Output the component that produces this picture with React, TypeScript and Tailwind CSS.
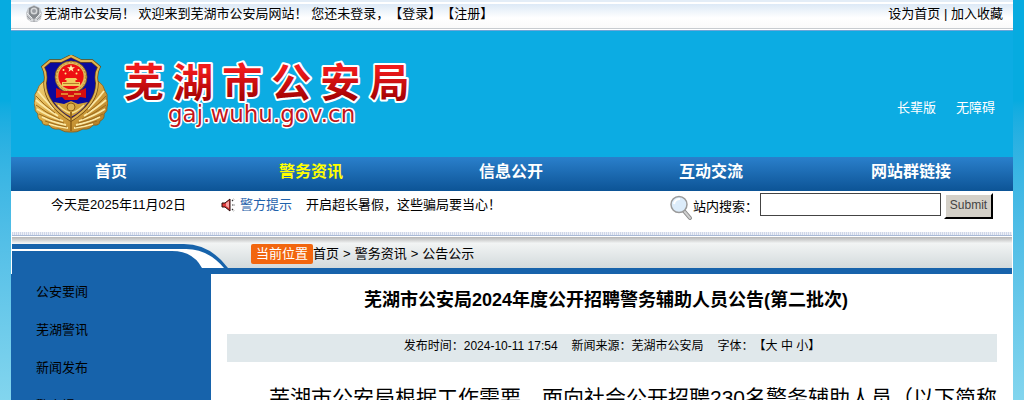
import React, { useState } from 'react';

interface NavItem {
  label: string;
  active?: boolean;
}

const navItems: NavItem[] = [
  { label: '首页' },
  { label: '警务资讯', active: true },
  { label: '信息公开' },
  { label: '互动交流' },
  { label: '网站群链接' },
];

const sideItems = ['公安要闻', '芜湖警讯', '新闻发布', '警方提示'];

const Emblem: React.FC<{ className?: string }> = ({ className }) => (
  <svg viewBox="0 0 74 78" className={className} aria-hidden="true">
    <defs>
      <linearGradient id="gold" x1="0" y1="0" x2="1" y2="1">
        <stop offset="0" stopColor="#f3d57a" />
        <stop offset="0.5" stopColor="#d8a640" />
        <stop offset="1" stopColor="#a87220" />
      </linearGradient>
    </defs>
    {/* Pine branches */}
    <path
      d="M10 26 Q4 30 3 36 Q0 39 1 44 Q-1 48 1 52 Q0 56 4 59 Q3 64 8 66 Q8 71 15 70 Q18 75 25 74 Q31 78 37 77 Q43 78 49 74 Q56 75 59 70 Q66 71 66 66 Q71 64 70 59 Q74 56 73 52 Q75 48 73 44 Q74 39 71 36 Q70 30 64 26 Z"
      fill="url(#gold)"
      stroke="#8a5c16"
      strokeWidth="0.8"
    />
    <path
      d="M4 36 Q10 44 20 54 M2 45 Q10 52 24 61 M3 54 Q14 61 29 66 M8 62 Q18 67 32 70 M15 69 Q24 72 34 73 M70 36 Q64 44 54 54 M72 45 Q64 52 50 61 M71 54 Q60 61 45 66 M66 62 Q56 67 42 70 M59 69 Q50 72 40 73"
      stroke="#fbe9a6"
      strokeWidth="1.800"
      fill="none"
    />
    <path
      d="M2 41 Q9 49 21 58 M2 50 Q12 58 26 64 M5 59 Q16 65 30 68 M11 66 Q22 70 33 72 M72 41 Q65 49 53 58 M72 50 Q62 58 48 64 M69 59 Q58 65 44 68 M63 66 Q52 70 41 72"
      stroke="#9c6b1d"
      strokeWidth="1"
      fill="none"
    />
    {/* Shield */}
    <path
      d="M37 1 L47 6 L58 6 L65 12 Q61 19 63 28 Q63 49 37 65 Q11 49 11 28 Q13 19 9 12 L16 6 L27 6 Z"
      fill="#0a0a9c"
      stroke="#70490f"
      strokeWidth="3.400"
    />
    <path
      d="M37 1 L47 6 L58 6 L65 12 Q61 19 63 28 Q63 49 37 65 Q11 49 11 28 Q13 19 9 12 L16 6 L27 6 Z"
      fill="none"
      stroke="#e0b555"
      strokeWidth="2"
    />
    <path d="M20 47 L30 49 L37 46 L44 49 L54 47 Q47 57 37 62 Q27 57 20 47 Z" fill="#cf9f38" />
    <path d="M24 50 Q30 56 36 58 M50 50 Q44 56 38 58" stroke="#f6df90" strokeWidth="1.500" fill="none" />
    <circle cx="37" cy="52" r="4" fill="#dcb352" stroke="#8a5c16" />
    <path d="M37 57 V76" stroke="#8a5c16" strokeWidth="1.500" />
    {/* National emblem */}
    <circle cx="37" cy="22" r="16" fill="#e3bd5c" stroke="#7d5210" strokeWidth="0.8" />
    <circle cx="37" cy="22" r="14.400" fill="none" stroke="#b88a35" strokeWidth="1" strokeDasharray="2 1.5" />
    <circle cx="37" cy="21.500" r="12.600" fill="#ee0f12" />
    <path d="M37 9.500 L38 12.200 H41 L38.600 14 L39.500 16.800 L37 15.100 L34.500 16.800 L35.400 14 L33 12.200 H36 Z" fill="#fff3b0" />
    <circle cx="29.500" cy="15" r="1" fill="#ffe98a" />
    <circle cx="44.500" cy="15" r="1" fill="#ffe98a" />
    <circle cx="31.500" cy="18.500" r="1" fill="#ffe98a" />
    <circle cx="42.500" cy="18.500" r="1" fill="#ffe98a" />
    <path d="M32 23 H42 L43.500 25 H41.500 V27 H46 V31 H28 V27 H32.500 V25 H30.500 Z" fill="#f2cb5c" />
    <path d="M29 28.500 H45" stroke="#a8651a" strokeWidth="0.8" />
    <path d="M22 33 L29 36 H45 L52 33 V43 L46 42 L43 45 H31 L28 42 L22 43 Z" fill="#d40d10" />
    <path d="M27 39 H34 M40 39 H47 M34 41 H40" stroke="#e9a63a" strokeWidth="1.500" />
  </svg>
);

const SmallBadge: React.FC = () => (
  <svg viewBox="0 0 18 18" className="h-[18px] w-[18px]" aria-hidden="true">
    <path d="M3 3 L9 0 L15 3 L17 8 L16 14 L12 17 H6 L2 14 L1 8 Z" fill="#c3c6ca" />
    <path d="M4 3 L9 1 L14 3 V9 Q13 12 9 14 Q5 12 4 9 Z" fill="#85898e" />
    <circle cx="9" cy="6" r="3.500" fill="#d6d8da" />
    <circle cx="9" cy="6" r="2" fill="#9a9ea3" />
    <path d="M2 8 L7 13 M16 8 L11 13 M4 15 H14" stroke="#eceeef" />
    <path d="M2 11 L6 15 M16 11 L12 15 M9 13 V17" stroke="#8d9196" strokeWidth="0.8" />
  </svg>
);

const SiteLogo: React.FC = () => (
  <svg viewBox="0 0 300 88" className="h-[88px] w-[300px] overflow-visible" role="img" aria-label="芜湖市公安局">
    <defs>
      <linearGradient id="logoRed" x1="0" y1="0" x2="0" y2="1">
        <stop offset="0.3" stopColor="#f01a1c" />
        <stop offset="0.8" stopColor="#a80305" />
      </linearGradient>
    </defs>
    <text
      x="6"
      y="54"
      fontSize="40"
      fill="url(#logoRed)"
      stroke="#fff"
      strokeWidth="4"
      strokeLinejoin="round"
      paintOrder="stroke"
      className="font-['Noto_Sans_CJK_SC',sans-serif] font-bold"
    >
      芜 湖 市 公 安 局
    </text>
    <text
      x="50"
      y="79"
      fontSize="23"
      fill="#c4161a"
      stroke="#fff"
      strokeWidth="3"
      strokeLinejoin="round"
      paintOrder="stroke"
      className="font-['DejaVu_Sans',sans-serif]"
    >
      gaj.wuhu.gov.cn
    </text>
  </svg>
);

const Speaker: React.FC = () => (
  <svg viewBox="0 0 15 14" className="h-3.5 w-[15px]" aria-hidden="true">
    <path d="M1 5 H4 L9 1 V13 L4 9 H1 Z" fill="#e23b3b" stroke="#2a0a0a" />
    <path d="M5 5 L8 3 V10 L5 8 Z" fill="#f7a3a3" />
    <path d="M11 3 L13 1 M11 7 H14 M11 11 L13 13" stroke="#333" strokeWidth="1.200" strokeDasharray="1.500 1" />
  </svg>
);

const Magnifier: React.FC = () => (
  <svg viewBox="0 0 24 26" className="h-[26px] w-6" aria-hidden="true">
    <path d="M15 16 L21 23" stroke="#8b8b8b" strokeWidth="4" strokeLinecap="round" />
    <path d="M15 16 L21 23" stroke="#cfcfcf" strokeWidth="2" strokeLinecap="round" />
    <circle cx="10" cy="9.500" r="8" fill="#dcecfa" stroke="#9a9a9a" strokeWidth="1.500" />
    <path d="M5 9 Q6 4 11 4" stroke="#fff" strokeWidth="2" fill="none" />
  </svg>
);

const App: React.FC = () => {
  const [keyword, setKeyword] = useState('');

  return (
    <div className="h-screen overflow-hidden bg-linear-to-b from-[#06abe0] from-25% to-[#82d5ee] px-[11px] font-['Liberation_Sans','Noto_Sans_CJK_SC',sans-serif] text-[13px] leading-5 text-black [text-spacing-trim:space-all]">
      {/* Top bar */}
      <div className="flex h-[31px] items-start justify-between border-b border-[#6aa5d8] bg-[linear-gradient(#e3edf7_2px,#fff_2px,#fff_4px,#dce9f6_4px,#fff_18px,#fafafa_28px,#c8ccd0_28px,#c8ccd0_29px,#fff_29px)] pt-1 pr-[10px] pl-[14px]">
        <div className="flex items-center">
          <SmallBadge />
          <p className="ml-px whitespace-pre">
            芜湖市公安局！ 欢迎来到芜湖市公安局网站！ 您还未登录，<a href="#login">【登录】</a>
            <a href="#register">【注册】</a>
          </p>
        </div>
        <p>
          <a href="#home">设为首页</a> | <a href="#favorite">加入收藏</a>
        </p>
      </div>

      {/* Banner */}
      <header className="flex h-[126px] items-start justify-between bg-[#0cace3] pr-[18px] pl-[23px]">
        <div className="flex items-start gap-2.5">
          <Emblem className="mt-6 h-[78px] w-[74px]" />
          <div className="pt-3">
            <SiteLogo />
          </div>
        </div>
        <div className="flex gap-5 pt-[67px] text-white">
          <a href="#elder">长辈版</a>
          <a href="#accessible">无障碍</a>
        </div>
      </header>

      {/* Main navigation */}
      <nav className="grid h-[34px] grid-cols-5 bg-linear-to-b from-[#2a80cc] to-[#0c5496] pr-0.5 text-center text-base leading-[30px] font-bold">
        {navItems.map((item) => (
          <a key={item.label} href="#nav" className={item.active ? 'text-[#ffff00]' : 'text-white'}>
            {item.label}
          </a>
        ))}
      </nav>

      <div className="bg-white px-px">
        {/* Date, notice and search */}
        <div className="flex h-[41px] items-start pr-[19px] pl-[39px]">
          <p className="w-[170px] pt-1">今天是2025年11月02日</p>
          <div className="flex items-center gap-1 pt-1">
            <Speaker />
            <a href="#tips" className="text-[#1f62ac]">警方提示</a>
            <a href="#notice" className="ml-2.5">开启超长暑假，这些骗局要当心！</a>
          </div>
          <form className="ml-auto flex items-start" onSubmit={(e) => e.preventDefault()}>
            <div className="pt-1">
              <Magnifier />
            </div>
            <label htmlFor="keyword" className="pt-1.5">站内搜索：</label>
            <input
              id="keyword"
              value={keyword}
              onChange={(e) => setKeyword(e.target.value)}
              className="mt-0.5 ml-0.5 h-[23px] w-[181px] border border-[#444] bg-white px-1"
            />
            <button
              type="submit"
              className="mt-0.5 ml-[3px] h-[26px] w-[49px] border-2 border-t-white border-r-black border-b-black border-l-white bg-[#d4d0c8] pb-1 text-xs leading-5 text-[#444]"
            >
              Submit
            </button>
          </form>
        </div>
        <div className="h-1 border-b border-[#a9bad6] bg-[repeating-linear-gradient(90deg,#cfd6e8_0_1px,#eceff6_1px_2px)]" />

        {/* Breadcrumb */}
        <div className="mt-px flex h-[37px] border-b-[6px] border-[#1763ab] bg-linear-to-b from-[#b4b4b4] via-[#f2f4f4] via-20% to-[#d3dadc]">
          <svg viewBox="0 0 222 37" className="h-[37px] w-[222px] shrink-0" aria-hidden="true">
            <path d="M0 7 H172 Q198 7 216 31 V37 H0 Z" fill="#1763ab" />
            <path d="M0 12 H172 Q195 11 212 31 H190 Q181 14 160 14 H0 Z" fill="#fff" />
          </svg>
          <p className="ml-[17px] flex h-[31px] items-center pt-0.5">
            <span className="rounded-xs bg-[#f2660f] px-[5px] text-white">当前位置</span>
            <a href="#home">首页</a>
            <span className="px-1">&gt;</span>
            <a href="#police">警务资讯</a>
            <span className="px-1">&gt;</span>
            <a href="#notice-list">公告公示</a>
          </p>
        </div>
      </div>

      <div className="flex bg-white">
        <aside className="w-[200px] shrink-0 bg-[#1763ab] pl-[25px]">
          <ul>
            {sideItems.map((item) => (
              <li key={item} className="h-[38px] leading-9">
                <a href="#category">{item}</a>
              </li>
            ))}
          </ul>
        </aside>
        <main className="min-w-0 flex-1 px-4">
          <h1 className="pt-3 pr-3 text-center text-lg leading-7 font-bold">
            芜湖市公安局2024年度公开招聘警务辅助人员公告(第二批次)
          </h1>
          <div className="mt-5 flex h-7 justify-center gap-3.5 bg-[#e0e8eb] text-xs leading-6">
            <span>发布时间：2024-10-11 17:54</span>
            <span>新闻来源：芜湖市公安局</span>
            <span>字体：【大 中 小】</span>
          </div>
          <p className="mt-4 indent-[42px] text-[21px] leading-10 whitespace-nowrap">
            芜湖市公安局根据工作需要，面向社会公开招聘230名警务辅助人员（以下简称
          </p>
        </main>
      </div>
    </div>
  );
};

export default App;
